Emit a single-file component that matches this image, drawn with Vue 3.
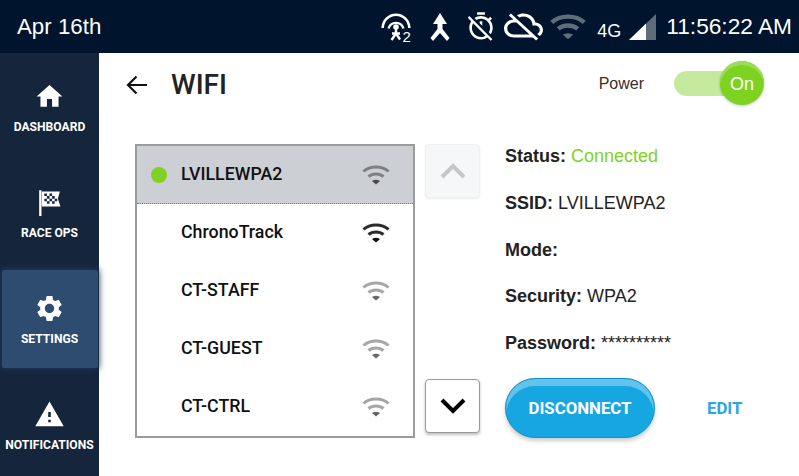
<template>
  <div class="app">
    <header class="topbar">
      <span class="datum">Apr 16th</span>
      <div class="status-icons">
        <svg class="ic-antenna" viewBox="0 0 30 30" fill="none" stroke="#fff">
          <path d="M1.700 16A13.300 13.300 0 0 1 28.300 16" stroke-width="2.600" />
          <path d="M7.500 16.500A7.800 7.800 0 0 1 22.500 16.500" stroke-width="2.400" />
          <circle cx="15" cy="15" r="2.800" fill="#fff" stroke="none" />
          <path d="M15 17v4.500M15 21.500l-4.500 6.500M15 21.500l4 6M11 21.500h8" stroke-width="2.400" />
          <text x="21.500" y="29.500" class="ic-two">2</text>
        </svg>
        <svg class="ic-merge" viewBox="0 0 22 28" fill="#fff">
          <path d="M11 0 18 11H13.500V16L20.500 25 18 28 11 20 4 28 1.500 25 8.500 16V11H4z" />
        </svg>
        <svg class="ic-timer" viewBox="2 1 20 22" fill="#fff">
          <path d="M19.04 4.55l-1.42 1.42C16.07 4.74 14.12 4 12 4c-1.83 0-3.53.55-4.95 1.48l1.46 1.46C9.53 6.35 10.73 6 12 6c3.87 0 7 3.13 7 7 0 1.27-.35 2.47-.94 3.49l1.45 1.45C20.45 16.53 21 14.83 21 13c0-2.12-.74-4.07-1.97-5.61l1.42-1.42-1.41-1.42zM15 1H9v2h6V1zm-4 8.44l2 2V8h-2v1.44zM3.02 4L1.75 5.27 4.5 8.03C3.55 9.45 3 11.16 3 13c0 4.97 4.03 9 9 9 1.84 0 3.55-.55 4.98-1.5l2.5 2.5 1.27-1.27-7.71-7.71L3.02 4zM12 20c-3.87 0-7-3.13-7-7 0-1.28.35-2.48.95-3.52l9.56 9.56c-1.03.61-2.23.96-3.51.96z" />
        </svg>
        <svg class="ic-cloud" viewBox="0 3 24 20" fill="#fff" preserveAspectRatio="none">
          <path d="M19.35 10.04C18.67 6.59 15.64 4 12 4c-1.48 0-2.85.43-4.01 1.17l1.46 1.46C10.21 6.23 11.08 6 12 6c3.04 0 5.5 2.46 5.5 5.5v.5H19c1.66 0 3 1.34 3 3 0 1.13-.64 2.11-1.56 2.62l1.45 1.45C23.16 18.16 24 16.68 24 15c0-2.64-2.05-4.78-4.65-4.96zM3 5.27l2.75 2.74C2.56 8.15 0 10.77 0 14c0 3.31 2.69 6 6 6h11.73l2 2L21 20.73 4.27 4 3 5.27zM7.73 10l8 8H6c-2.21 0-4-1.79-4-4s1.79-4 4-4h1.73z" />
        </svg>
        <svg class="ic-wifi-top" viewBox="0 0 28 20" fill="none" stroke="#5f6d7a">
          <path d="M1.500 6.500C8 .5 20 .5 26.500 6.500" stroke-width="3.400" />
          <path d="M6.500 11.500C10.500 8 17.500 8 21.500 11.500" stroke-width="3.400" />
          <path d="M10 16Q14 13.500 18 16L14 19.500z" fill="#5f6d7a" stroke="none" />
        </svg>
        <span class="net">4G</span>
        <svg class="ic-signal" viewBox="0 0 27 26">
          <path d="M0 26 27 0V26z" fill="#5f6d7a" />
          <path d="M0 26 17 9.600V26z" fill="#fff" />
        </svg>
      </div>
      <span class="clock">11:56:22 AM</span>
    </header>

    <div class="body">
      <nav class="sidebar">
        <a
          v-for="item in navItems"
          :key="item.label"
          class="nav-item"
          :class="{ active: item.active }"
        >
          <svg v-if="item.icon === 'home'" class="nav-icon" viewBox="0 0 24 24" fill="#fff">
            <path d="M10 20v-6h4v6h5v-8h3L12 3 2 12h3v8z" />
          </svg>
          <svg v-else-if="item.icon === 'flag'" class="nav-icon" viewBox="0 0 24 24">
            <path d="M4 2.500h1.800v20H4z" fill="#fff" />
            <path d="M6 3.500H20L18.500 9 20.500 15H6z" fill="#fff" />
            <path d="M8 5h2v2H8zM12 5h2v2h-2zM10 7h2v2h-2zM14 7h2v2h-2zM8 9h2v2H8zM12 9h2v2h-2zM16 9h2v2h-2zM10 11h2v2h-2zM14 11h2v2h-2z" fill="#15253b" />
          </svg>
          <svg v-else-if="item.icon === 'gear'" class="nav-icon" viewBox="0 0 24 24" fill="#fff">
            <path d="M19.14 12.94c.04-.3.06-.61.06-.94 0-.32-.02-.64-.07-.94l2.03-1.58c.18-.14.23-.41.12-.61l-1.92-3.32c-.12-.22-.37-.29-.59-.22l-2.39.96c-.5-.38-1.03-.7-1.62-.94l-.36-2.54c-.04-.24-.24-.41-.48-.41h-3.84c-.24 0-.43.17-.47.41l-.36 2.54c-.59.24-1.13.57-1.62.94l-2.39-.96c-.22-.08-.47 0-.59.22L2.74 8.87c-.12.21-.08.47.12.61l2.03 1.58c-.05.3-.09.63-.09.94s.02.64.07.94l-2.03 1.58c-.18.14-.23.41-.12.61l1.92 3.32c.12.22.37.29.59.22l2.39-.96c.5.38 1.03.7 1.62.94l.36 2.54c.05.24.24.41.48.41h3.84c.24 0 .44-.17.47-.41l.36-2.54c.59-.24 1.13-.56 1.62-.94l2.39.96c.22.08.47 0 .59-.22l1.92-3.32c.12-.22.07-.47-.12-.61l-2.01-1.58zM12 15.600c-1.98 0-3.600-1.620-3.600-3.600s1.620-3.600 3.600-3.600 3.600 1.620 3.600 3.600-1.620 3.600-3.600 3.600z" />
          </svg>
          <svg v-else class="nav-icon" viewBox="0 0 24 24" fill="#fff">
            <path d="M1 21h22L12 2 1 21zm12-3h-2v-2h2v2zm0-4h-2v-4h2v4z" />
          </svg>
          <span class="nav-label">{{ item.label }}</span>
        </a>
      </nav>

      <main class="content">
        <div class="title-row">
          <svg class="back" viewBox="0 0 22 20" fill="none" stroke="#111" stroke-width="2.200">
            <path d="M21 10H2M10.500 1.500 2 10l8.500 8.500" />
          </svg>
          <h1>WIFI</h1>
          <span class="power-label">Power</span>
          <div class="toggle">
            <div class="track"></div>
            <div class="knob">On</div>
          </div>
        </div>

        <div class="panel">
          <ul class="network-list">
            <li
              v-for="net in networks"
              :key="net.name"
              :class="{ selected: net.connected }"
            >
              <span class="dot"></span>
              <span class="net-name">{{ net.name }}</span>
              <svg class="wifi" viewBox="0 0 28 20" fill="none" :stroke="net.color">
                <path d="M1.500 6.500C8 .5 20 .5 26.500 6.500" stroke-width="3" />
                <path d="M6.500 11.500C10.500 8 17.500 8 21.500 11.500" stroke-width="3" />
                <path d="M10 16Q14 13.500 18 16L14 19.500z" :fill="net.dark" stroke="none" />
              </svg>
            </li>
          </ul>

          <div class="arrows">
            <button class="arrow disabled">
              <svg viewBox="0 0 26 16" fill="none" stroke="#c4c6c8" stroke-width="4">
                <path d="M2 14 13 3l11 11" />
              </svg>
            </button>
            <button class="arrow">
              <svg viewBox="0 0 26 16" fill="none" stroke="#000" stroke-width="4">
                <path d="M2 2l11 11L24 2" />
              </svg>
            </button>
          </div>

          <div class="details">
            <p><strong>Status:</strong> <span class="connected">Connected</span></p>
            <p><strong>SSID:</strong> LVILLEWPA2</p>
            <p><strong>Mode:</strong></p>
            <p><strong>Security:</strong> WPA2</p>
            <p><strong>Password:</strong> **********</p>
            <div class="actions">
              <button class="disconnect">DISCONNECT</button>
              <a class="edit">EDIT</a>
            </div>
          </div>
        </div>
      </main>
    </div>
  </div>
</template>

<script setup>
const navItems = [
  { label: "DASHBOARD", icon: "home" },
  { label: "RACE OPS", icon: "flag" },
  { label: "SETTINGS", icon: "gear", active: true },
  { label: "NOTIFICATIONS", icon: "warn" },
];

const networks = [
  { name: "LVILLEWPA2", connected: true, color: "#7d7f82", dark: "#4a4a4a" },
  { name: "ChronoTrack", color: "#2b2b2b", dark: "#111" },
  { name: "CT-STAFF", color: "#a6a6a6", dark: "#666" },
  { name: "CT-GUEST", color: "#a6a6a6", dark: "#666" },
  { name: "CT-CTRL", color: "#a6a6a6", dark: "#666" },
];
</script>

<style>
html,
body {
  margin: 0;
  background: #fff;
}
</style>

<style scoped>
.app {
  width: 799px;
  height: 476px;
  display: flex;
  flex-direction: column;
  overflow: hidden;
  font-family: Roboto, sans-serif;
}

.topbar {
  height: 53px;
  flex: none;
  display: flex;
  align-items: center;
  background: #01142e;
  color: #fff;
  font-family: "Liberation Sans", Arial, sans-serif;
  font-size: 22.300px;
  padding: 0 7px 0 17px;
  box-sizing: border-box;
}

.clock {
  font-size: 22.700px;
}

.status-icons {
  margin-left: auto;
  display: flex;
  align-items: center;
}

.status-icons svg {
  display: block;
}

.ic-antenna {
  width: 30px;
  height: 30px;
  margin-right: 18px;
  overflow: visible;
}

.ic-two {
  font-family: "Liberation Sans", sans-serif;
  font-size: 15px;
  fill: #fff;
  stroke: none;
}

.ic-merge {
  width: 22px;
  height: 28px;
  margin-right: 17px;
}

.ic-timer {
  width: 26px;
  height: 29px;
  margin-right: 10px;
}

.ic-cloud {
  width: 39px;
  height: 30px;
  margin-right: 6px;
}

.ic-wifi-top {
  width: 38px;
  height: 26px;
  margin-right: 10px;
}

.net {
  font-size: 18px;
  margin: 9px 8px 0 0;
}

.ic-signal {
  width: 27px;
  height: 26px;
  margin-right: 10px;
}

.body {
  flex: 1;
  display: flex;
  min-height: 0;
}

.sidebar {
  width: 99px;
  flex: none;
  background: #15253b;
  display: flex;
  flex-direction: column;
}

.nav-item {
  flex: 1;
  margin: 5px 1px 2px 2px;
  padding: 1px 1px 0 0;
  display: flex;
  flex-direction: column;
  align-items: center;
  justify-content: center;
  color: #fff;
}

.nav-item.active {
  background: #2d4c70;
  border-radius: 2px;
  box-shadow: 0 0 6px 1px #22395a;
}

.nav-icon {
  width: 31px;
  height: 31px;
  display: block;
}

.nav-label {
  font-size: 12.100px;
  font-weight: 700;
  margin-top: 8px;
  white-space: nowrap;
}

.content {
  flex: 1;
  min-width: 0;
  padding: 0 35px 0 36px;
}

.title-row {
  height: 62px;
  display: flex;
  align-items: center;
}

.back {
  width: 22px;
  height: 20px;
  margin: 2px 0 0 -9px;
}

h1 {
  margin: 0 0 0 23px;
  font-size: 28px;
  font-weight: 500;
  color: #222;
}

.power-label {
  margin-left: auto;
  font-family: "Liberation Sans", sans-serif;
  font-size: 16px;
  color: #3a2e2a;
}

.toggle {
  position: relative;
  width: 90px;
  height: 44px;
  margin-top: -2px;
  margin-left: 30px;
}

.track {
  width: 70px;
  height: 25px;
  margin-top: 10px;
  border-radius: 13px;
  background: #c5ea9e;
}

.knob {
  position: absolute;
  left: 46px;
  top: 0;
  width: 44px;
  height: 44px;
  border-radius: 50%;
  background: #7ed321;
  box-shadow: inset 0 4px 0 #9bdd55, 0 1px 3px rgba(0, 0, 0, 0.25);
  color: #fff;
  font-family: "Liberation Sans", sans-serif;
  font-size: 18px;
  line-height: 46px;
  text-align: center;
}

.panel {
  display: flex;
  align-items: flex-start;
  margin-top: 29px;
}

.network-list {
  width: 280px;
  height: 294px;
  box-sizing: border-box;
  margin: 0;
  padding: 0;
  list-style: none;
  border: 2px solid #9b9b9b;
  flex: none;
}

.network-list li {
  height: 58px;
  display: flex;
  align-items: center;
  padding: 0 23px 0 14px;
  box-sizing: border-box;
}

.network-list li.selected {
  background: #ccd0d4;
  border-bottom: 1px dotted #777;
}

.dot {
  width: 16px;
  height: 16px;
  border-radius: 50%;
  flex: none;
}

.selected .dot {
  background: #7ed321;
}

.net-name {
  margin: 0 0 3px 14px;
  font-size: 17.800px;
  font-weight: 500;
  color: #111;
}

.selected .net-name {
  margin-bottom: 2px;
}

.wifi {
  width: 28px;
  height: 20px;
  margin-left: auto;
}

.arrows {
  height: 289px;
  display: flex;
  flex-direction: column;
  justify-content: space-between;
  margin-left: 10px;
}

.arrow {
  width: 55px;
  height: 54px;
  padding: 0;
  display: flex;
  align-items: center;
  justify-content: center;
  background: #fff;
  border: 1px solid #999;
  border-radius: 4px;
  box-shadow: 0 2px 3px rgba(0, 0, 0, 0.25);
}

.arrow.disabled {
  background: #f6f7f9;
  border-color: #f0f1f3;
  box-shadow: 0 1px 2px rgba(0, 0, 0, 0.08);
}

.arrow svg {
  width: 26px;
  height: 16px;
}

.details {
  margin-left: 25px;
  flex: 1;
  color: #222;
  font-family: "Liberation Sans", sans-serif;
  font-size: 18px;
}

.details p {
  margin: 0;
  height: 46.750px;
  padding-top: 2px;
  box-sizing: border-box;
  line-height: 20px;
  white-space: nowrap;
}

.details strong {
  font-weight: 700;
}

.connected {
  color: #7ed321;
}

.actions {
  display: flex;
  align-items: center;
}

.disconnect {
  width: 150px;
  height: 60px;
  padding: 0;
  border: 1px solid #1291c9;
  border-radius: 30px;
  background: #16a7e2;
  box-shadow: inset 0 7px 0 #62c3ec, 0 3px 4px rgba(0, 0, 0, 0.2);
  color: #fff;
  font-family: Roboto, sans-serif;
  font-size: 16.800px;
  font-weight: 700;
}

.edit {
  margin-left: 52px;
  color: #2ea6e0;
  font-family: Roboto, sans-serif;
  font-size: 16.800px;
  font-weight: 700;
}
</style>
